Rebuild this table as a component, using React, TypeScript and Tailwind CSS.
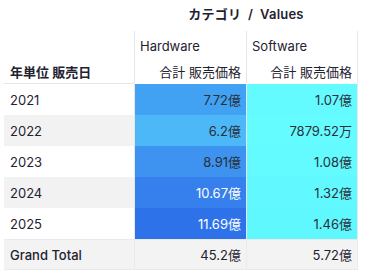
const rows = [
  { year: "2021", hw: "7.72億", sw: "1.07億", hwBg: "bg-[#41a1f2]", swBg: "bg-[#63fbff]", stripe: false, light: false },
  { year: "2022", hw: "6.2億", sw: "7879.52万", hwBg: "bg-[#4cb8f8]", swBg: "bg-[#65fcff]", stripe: true, light: false },
  { year: "2023", hw: "8.91億", sw: "1.08億", hwBg: "bg-[#3d93ef]", swBg: "bg-[#63fbff]", stripe: false, light: false },
  { year: "2024", hw: "10.67億", sw: "1.32億", hwBg: "bg-[#3580ec]", swBg: "bg-[#61f9ff]", stripe: true, light: true },
  { year: "2025", hw: "11.69億", sw: "1.46億", hwBg: "bg-[#2e72ea]", swBg: "bg-[#60f8ff]", stripe: false, light: true },
];

export default function App() {
  return (
    <div
      className="w-[373px] h-[280px] bg-white text-[13px] text-[#1f2230] pl-1 overflow-hidden"
      style={{ fontFamily: 'Inter, "Noto Sans CJK JP", sans-serif' }}
    >
      <div className="grid grid-cols-[130px_112px_112px]">
        {/* header: title */}
        <div className="h-[31px]" />
        <div className="col-span-2 h-[29px] flex items-center justify-center font-semibold tracking-[0.2px]">
          カテゴリ&nbsp;&nbsp;/&nbsp;&nbsp;Values
        </div>

        {/* header: category */}
        <div className="h-[31px]" />
        <div className="h-[31px] border-l border-[#e6e6ec] flex items-center px-[5px]">Hardware</div>
        <div className="h-[31px] border-l border-r border-[#e6e6ec] flex items-center px-[5px]">Software</div>

        {/* header: measure */}
        <div className="h-[22px] border-b border-[#e6e6ec] flex items-center px-[6px] font-semibold">年単位 販売日</div>
        <div className="h-[22px] border-l border-[#e6e6ec] flex items-center justify-end px-[5px]">合計 販売価格</div>
        <div className="h-[22px] border-l border-r border-[#e6e6ec] flex items-center justify-end px-[5px]">合計 販売価格</div>

        {rows.map((r) => (
          <div key={r.year} className="contents">
            <div className={`h-[31px] flex items-center px-[6px] pt-[2px] ${r.stripe ? "bg-[#f2f2f2]" : "bg-white"}`}>{r.year}</div>
            <div className={`h-[31px] border-l border-[#e6e6ec] flex items-center justify-end px-[5px] pt-[2px] ${r.hwBg} ${r.light ? "text-white" : "text-[#2a2f3a]"}`}>
              {r.hw}
            </div>
            <div className={`h-[31px] border-l border-r border-[#e6e6ec] flex items-center justify-end px-[5px] pt-[2px] ${r.swBg} text-[#2a2f3a]`}>
              {r.sw}
            </div>
          </div>
        ))}

        {/* grand total */}
        <div className="h-[31px] border-t border-b border-[#e9e9ee] bg-[#f3f3f4] flex items-center px-[6px] pt-[2px] font-medium">Grand Total</div>
        <div className="h-[31px] border-t border-b border-l border-[#e9e9ee] bg-[#f3f3f4] flex items-center justify-end px-[5px] pt-[2px]">45.2億</div>
        <div className="h-[31px] border-t border-b border-l border-r border-[#e9e9ee] bg-[#f3f3f4] flex items-center justify-end px-[5px] pt-[2px]">5.72億</div>
      </div>
    </div>
  );
}
